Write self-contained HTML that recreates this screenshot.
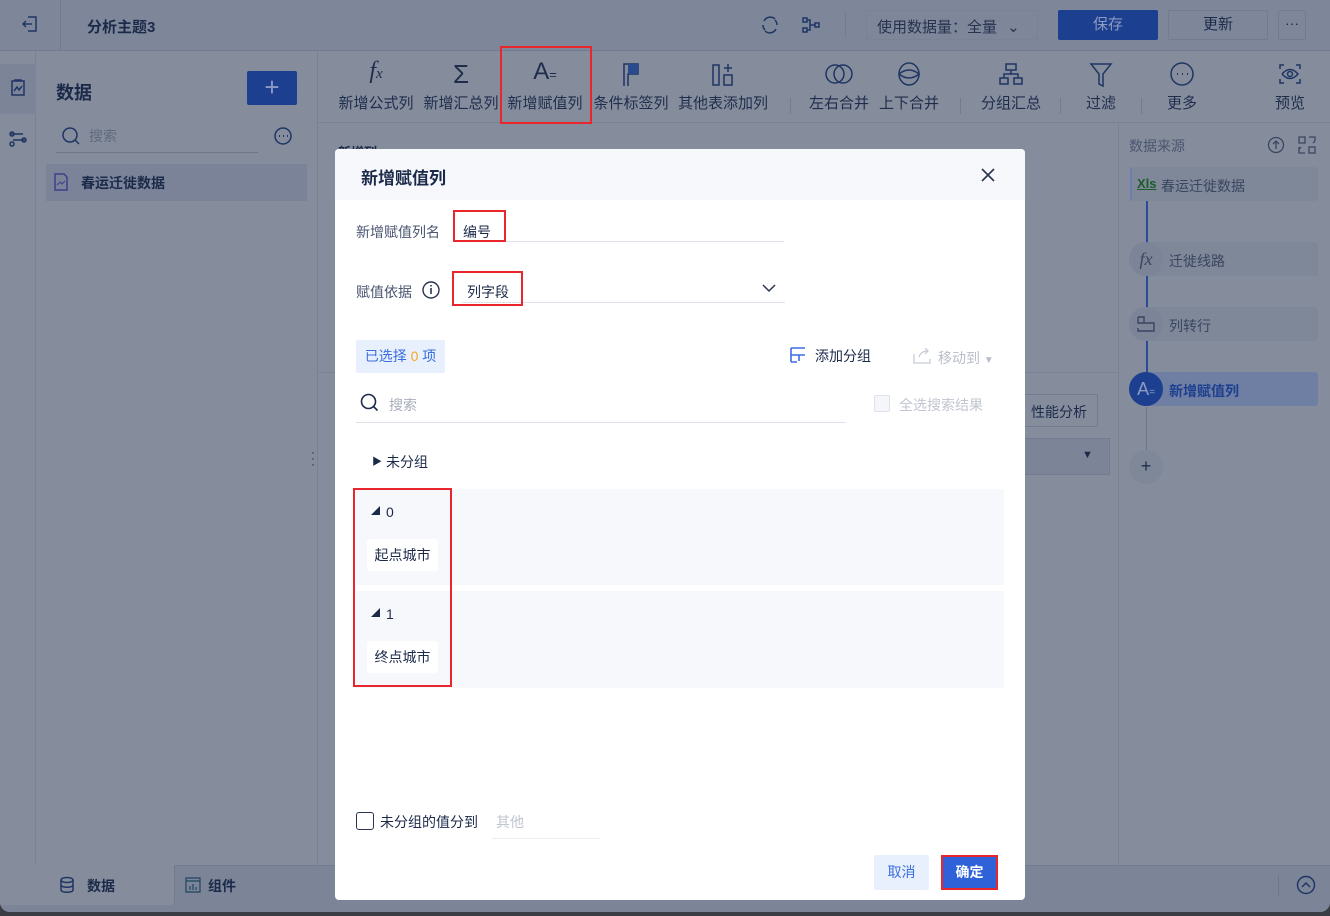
<!DOCTYPE html>
<html><head><meta charset="utf-8"><style>
*{margin:0;padding:0;box-sizing:border-box}
body{width:1330px;height:916px;overflow:hidden;background:#3a3d44;font-family:"Liberation Sans","Noto Sans CJK SC",sans-serif;color:#1c2a4a;font-size:14px}
.a{position:absolute}
.root{position:absolute;left:0;top:0;width:1330px;height:912px;background:#858d9c;border-radius:0 0 10px 10px;overflow:hidden}
.tb{font-size:15px;color:#1f2d4d;text-align:center;white-space:nowrap}
.tb>div:first-child,.tb>svg{display:block;margin:0 auto;height:34px}
.ic{stroke:#1f3563;fill:none;stroke-width:1.5}
.red{border:2px solid #e8262c}
</style></head><body>
<div class="root">
 <div class="a" style="left:0;top:0;width:1330px;height:51px;background:#7e8799;border-bottom:1px solid #737c8e"></div>
 <div class="a" style="left:60px;top:0;width:1px;height:51px;background:#737c8e"></div>
 <svg class="a" style="left:20px;top:14px" width="20" height="20" viewBox="0 0 20 20"><path class="ic" d="M8 3h8v14H8M3 10h9M6 7l-3 3 3 3"/></svg>
 <div class="a" style="left:87px;top:16px;font-weight:bold;font-size:15px">分析主题3</div>
 <svg class="a" style="left:759px;top:14px" width="22" height="22" viewBox="0 0 22 22"><path class="ic" d="M5 7a7 7 0 0 1 11-2M17 15a7 7 0 0 1-11 2M4 11a7 7 0 0 0 2 5M18 11a7 7 0 0 0-2-5"/></svg>
 <svg class="a" style="left:800px;top:14px" width="22" height="22" viewBox="0 0 22 22"><path class="ic" d="M3 4h4v4H3zM3 14h4v4H3zM15 9h4v4h-4zM7 6h3v10H7M10 11h5"/></svg>
 <div class="a" style="left:845px;top:12px;width:1px;height:26px;background:#737c8e"></div>
 <div class="a" style="left:866px;top:10px;width:172px;height:30px;border:1px solid #7a8395;border-radius:2px;font-size:15px;padding:5px 10px;color:#25314e">使用数据量：全量 <span style="margin-left:6px">&#8964;</span></div>
 <div class="a" style="left:1058px;top:10px;width:100px;height:30px;background:#1c3f8f;border-radius:2px;color:#8d9bc0;text-align:center;line-height:30px;font-size:15px">保存</div>
 <div class="a" style="left:1168px;top:10px;width:100px;height:30px;border:1px solid #737c8e;border-radius:2px;text-align:center;line-height:28px;font-size:15px">更新</div>
 <div class="a" style="left:1278px;top:10px;width:28px;height:30px;border:1px solid #737c8e;border-radius:2px;text-align:center;line-height:24px">···</div>

 <div class="a" style="left:0;top:51px;width:36px;height:814px;border-right:1px solid #7a8395"></div>
 <div class="a" style="left:0;top:64px;width:36px;height:50px;background:#7c8597"></div>
 <svg class="a" style="left:8px;top:78px" width="20" height="20" viewBox="0 0 20 20"><path class="ic" d="M4 3h12v14H4zM7 3v-1h6v1M6 13l3-4 2 3 3-4"/></svg>
 <svg class="a" style="left:8px;top:128px" width="20" height="20" viewBox="0 0 20 20"><path class="ic" d="M3 6h12M5 12h12"/><circle class="ic" cx="4" cy="6" r="2"/><circle class="ic" cx="16" cy="12" r="2"/><circle class="ic" cx="4" cy="16" r="2"/></svg>

 <div class="a" style="left:317px;top:51px;width:1px;height:814px;background:#7a8395"></div>
 <div class="a" style="left:56px;top:79px;font-size:18px;font-weight:bold">数据</div>
 <div class="a" style="left:247px;top:71px;width:50px;height:34px;background:#1c3f8f;border-radius:2px;color:#8d9bc0;text-align:center;font-size:26px;line-height:32px">+</div>
 <svg class="a" style="left:60px;top:125px" width="22" height="22" viewBox="0 0 22 22"><circle class="ic" cx="10" cy="10" r="7"/><path class="ic" d="M15 15l4 4"/></svg>
 <div class="a" style="left:89px;top:126px;color:#5f6a80">搜索</div>
 <div class="a" style="left:56px;top:152px;width:202px;height:1px;background:#6d778a"></div>
 <svg class="a" style="left:272px;top:125px" width="22" height="22" viewBox="0 0 22 22"><circle class="ic" cx="11" cy="11" r="8"/><path d="M7 11h1M11 11h1M15 11h1" stroke="#1f3563" stroke-width="2"/></svg>
 <div class="a" style="left:46px;top:164px;width:261px;height:37px;background:#7a8397"></div>
 <svg class="a" style="left:53px;top:173px" width="16" height="18" viewBox="0 0 16 18"><path d="M2 1h9l3 3v13H2z" stroke="#3c3f8a" fill="none" stroke-width="1.5"/><path d="M4 12l3-3 2 2 3-3" stroke="#3c3f8a" fill="none"/></svg>
 <div class="a" style="left:81px;top:173px;font-weight:bold">春运迁徙数据</div>
 <div class="a" style="left:311px;top:449px;color:#1f2d4d;font-size:12px;line-height:6px">·<br>·<br>·</div>

 <div class="a" style="left:318px;top:122px;width:1012px;height:1px;background:#7a8395"></div>
 <div class="a tb" style="left:336px;top:58px;width:80px"><div style="font-style:italic;font-size:24px;font-family:'Liberation Serif',serif">f<span style="font-size:15px">x</span></div>新增公式列</div>
 <div class="a tb" style="left:421px;top:58px;width:80px"><div style="font-size:26px;line-height:32px">Σ</div>新增汇总列</div>
 <div class="a tb" style="left:505px;top:58px;width:80px"><div style="font-size:24px">A<span style="font-size:13px">=</span></div>新增赋值列</div>
 <div class="a red" style="left:500px;top:46px;width:92px;height:78px"></div>
 <div class="a tb" style="left:591px;top:58px;width:80px"><svg width="22" height="34" viewBox="0 0 22 34"><path d="M4 28V6h14v10H8v12" stroke="#1f3563" fill="none" stroke-width="1.5"/><path d="M8 6h10v10H8z" fill="#2a4a8f"/></svg>条件标签列</div>
 <div class="a tb" style="left:674px;top:58px;width:98px"><svg width="26" height="34" viewBox="0 0 26 34"><path class="ic" d="M3 7h6v20H3zM14 17h8v10h-8zM18 6v8M14 10h8"/></svg>其他表添加列</div>
 <div class="a" style="left:790px;top:98px;width:1px;height:16px;background:#737c8e"></div>
 <div class="a tb" style="left:806px;top:58px;width:66px"><svg width="30" height="34" viewBox="0 0 30 34"><circle class="ic" cx="11" cy="16" r="9"/><circle class="ic" cx="19" cy="16" r="9"/></svg>左右合并</div>
 <div class="a tb" style="left:876px;top:58px;width:66px"><svg width="30" height="34" viewBox="0 0 30 34"><ellipse class="ic" cx="15" cy="16" rx="10" ry="11"/><path class="ic" d="M5 16q10-8 20 0q-10 8-20 0"/></svg>上下合并</div>
 <div class="a" style="left:960px;top:98px;width:1px;height:16px;background:#737c8e"></div>
 <div class="a tb" style="left:978px;top:58px;width:66px"><svg width="30" height="34" viewBox="0 0 30 34"><path class="ic" d="M10 6h10v6H10zM4 20h8v6H4zM18 20h8v6h-8zM15 12v4M8 20v-4h14v4"/></svg>分组汇总</div>
 <div class="a" style="left:1060px;top:98px;width:1px;height:16px;background:#737c8e"></div>
 <div class="a tb" style="left:1076px;top:58px;width:50px"><svg width="30" height="34" viewBox="0 0 30 34"><path class="ic" d="M5 6h20l-8 10v12l-4-2V16z"/></svg>过滤</div>
 <div class="a" style="left:1141px;top:98px;width:1px;height:16px;background:#737c8e"></div>
 <div class="a tb" style="left:1157px;top:58px;width:50px"><svg width="30" height="34" viewBox="0 0 30 34"><circle class="ic" cx="15" cy="16" r="11"/><path d="M10 16h1M15 16h1M20 16h1" stroke="#1f3563" stroke-width="2"/></svg>更多</div>
 <div class="a tb" style="left:1265px;top:58px;width:50px"><svg width="30" height="34" viewBox="0 0 30 34"><path class="ic" d="M5 11V7h4M21 7h4v4M25 21v4h-4M9 25H5v-4M7 16q8-9 16 0q-8 9-16 0"/><circle class="ic" cx="15" cy="16" r="2.5"/></svg>预览</div>

 <div class="a" style="left:338px;top:142px;font-weight:bold;font-size:13px">新增列</div>
 <div class="a" style="left:318px;top:372px;width:800px;height:1px;background:#7a8395"></div>
 <div class="a" style="left:1022px;top:394px;width:76px;height:33px;border:1px solid #737c8e;border-radius:2px;padding:7px 0 0 8px">性能分析</div>
 <div class="a" style="left:1022px;top:438px;width:88px;height:37px;background:#7c8597;border:1px solid #737c8e"></div>
 <div class="a" style="left:1082px;top:449px;font-size:11px">▼</div>

 <div class="a" style="left:1118px;top:122px;width:1px;height:743px;background:#7a8395"></div>
 <div class="a" style="left:1129px;top:136px;color:#4a5570">数据来源</div>
 <svg class="a" style="left:1266px;top:135px" width="20" height="20" viewBox="0 0 20 20"><circle cx="10" cy="10" r="7.5" stroke="#3a4560" fill="none" stroke-width="1.3"/><path d="M10 14V6M7 9l3-3 3 3" stroke="#3a4560" fill="none" stroke-width="1.3"/></svg>
 <svg class="a" style="left:1297px;top:135px" width="20" height="20" viewBox="0 0 20 20"><path d="M2 2h6v6H2zM12 12h6v6h-6zM12 2h6v4M2 12v6h6M16 8l2-2M4 12l-2 2" stroke="#3a4560" fill="none" stroke-width="1.3"/></svg>
 <div class="a" style="left:1130px;top:167px;width:188px;height:34px;background:#7f8899;border-radius:3px;border-left:2px solid #6b7fae"></div>
 <div class="a" style="left:1137px;top:176px;font-size:13px;color:#1d5c2a;font-weight:bold;text-decoration:underline">Xls</div>
 <div class="a" style="left:1161px;top:176px;color:#3a4560">春运迁徙数据</div>
 <div class="a" style="left:1146px;top:201px;width:2px;height:172px;background:#2a4a9f"></div>
 <div class="a" style="left:1146px;top:407px;width:1px;height:48px;background:#6d778a"></div>
 <div class="a" style="left:1148px;top:242px;width:170px;height:34px;background:#7f8899;border-radius:3px"></div>
 <div class="a" style="left:1129px;top:242px;width:34px;height:34px;border-radius:17px;background:#7c8597;text-align:center;line-height:34px;font-style:italic;color:#3a4560;font-size:18px;font-family:'Liberation Serif',serif">fx</div>
 <div class="a" style="left:1169px;top:251px;color:#3a4560">迁徙线路</div>
 <div class="a" style="left:1148px;top:307px;width:170px;height:34px;background:#7f8899;border-radius:3px"></div>
 <div class="a" style="left:1129px;top:307px;width:34px;height:34px;border-radius:17px;background:#7c8597"></div>
 <svg class="a" style="left:1136px;top:315px" width="20" height="18" viewBox="0 0 20 18"><path d="M2 2h6v6M2 2v6h16v8H2v-3" stroke="#3a4560" fill="none" stroke-width="1.4"/></svg>
 <div class="a" style="left:1169px;top:316px;color:#3a4560">列转行</div>
 <div class="a" style="left:1148px;top:372px;width:170px;height:34px;background:#6f7fa3;border-radius:3px"></div>
 <div class="a" style="left:1129px;top:372px;width:34px;height:34px;border-radius:17px;background:#1c3f8f;text-align:center;line-height:34px;color:#8d9bc0;font-size:18px">A<span style="font-size:10px">=</span></div>
 <div class="a" style="left:1169px;top:381px;color:#1c3f8f;font-weight:bold">新增赋值列</div>
 <div class="a" style="left:1129px;top:450px;width:34px;height:34px;border-radius:17px;background:#7f8899;text-align:center;line-height:32px;font-size:18px;color:#1f2d4d">+</div>

 <div class="a" style="left:0;top:865px;width:1330px;height:51px;background:#7c8598;border-top:1px solid #737c8e"></div>
 <div class="a" style="left:0;top:865px;width:175px;height:40px;background:#858d9c;border-radius:0 0 4px 0;border-right:1px solid #737c8e"></div>
 <svg class="a" style="left:58px;top:876px" width="18" height="18" viewBox="0 0 18 18"><ellipse cx="9" cy="4" rx="6" ry="2.5" stroke="#1f3563" fill="none" stroke-width="1.5"/><path d="M3 4v10c0 3 12 3 12 0V4M3 9c0 3 12 3 12 0" stroke="#1f3563" fill="none" stroke-width="1.5"/></svg>
 <div class="a" style="left:87px;top:876px;font-weight:bold">数据</div>
 <svg class="a" style="left:185px;top:877px" width="16" height="16" viewBox="0 0 16 16"><path d="M1 1h14v14H1zM1 4h14M5 13V9M8 13V7M11 13V10" stroke="#1f4560" fill="none" stroke-width="1.2"/></svg>
 <div class="a" style="left:208px;top:876px;font-weight:bold">组件</div>
 <div class="a" style="left:1278px;top:876px;width:1px;height:20px;background:#6d778a"></div>
 <svg class="a" style="left:1295px;top:874px" width="22" height="22" viewBox="0 0 22 22"><circle cx="11" cy="11" r="8.5" stroke="#1f3563" fill="none" stroke-width="1.5"/><path d="M7 13l4-4 4 4" stroke="#1f3563" fill="none" stroke-width="1.5"/></svg>

 <div class="a" style="left:335px;top:149px;width:690px;height:751px;background:#fff;border-radius:4px;overflow:hidden">
  <div class="a" style="left:0;top:0;width:690px;height:51px;background:#f7f8fb"></div>
  <div class="a" style="left:26px;top:15px;font-size:17px;font-weight:bold;color:#1c2a4a">新增赋值列</div>
  <svg class="a" style="left:644px;top:17px" width="18" height="18" viewBox="0 0 18 18"><path d="M3 3l12 12M15 3L3 15" stroke="#2a3550" stroke-width="1.6"/></svg>

  <div class="a" style="left:21px;top:73px;color:#4a5570;font-size:14px">新增赋值列名</div>
  <div class="a" style="left:128px;top:73px;color:#1c2a4a">编号</div>
  <div class="a" style="left:165px;top:92px;width:284px;height:1px;background:#dfe2ea"></div>
  <div class="a red" style="left:118px;top:61px;width:53px;height:32px"></div>

  <div class="a" style="left:21px;top:133px;color:#4a5570">赋值依据</div>
  <svg class="a" style="left:86px;top:131px" width="20" height="20" viewBox="0 0 20 20"><circle cx="10" cy="10" r="8" stroke="#2a3550" fill="none" stroke-width="1.4"/><path d="M10 8v6M10 5v1.5" stroke="#2a3550" stroke-width="1.6"/></svg>
  <div class="a" style="left:132px;top:133px;color:#1c2a4a">列字段</div>
  <svg class="a" style="left:426px;top:133px" width="16" height="12" viewBox="0 0 16 12"><path d="M2 3l6 6 6-6" stroke="#2a3550" fill="none" stroke-width="1.5"/></svg>
  <div class="a" style="left:127px;top:153px;width:323px;height:1px;background:#dfe2ea"></div>
  <div class="a red" style="left:117px;top:122px;width:71px;height:35px"></div>

  <div class="a" style="left:21px;top:191px;width:89px;height:33px;background:#e9f0fd;border-radius:2px;color:#3a6ee0;line-height:33px;text-align:center">已选择 <span style="color:#f5a623">0</span> 项</div>
  <svg class="a" style="left:455px;top:197px" width="16" height="18" viewBox="0 0 16 18"><path d="M1 2h14M1 2v14M1 9h14M1 16h6M9 9v6" stroke="#3a6ee0" fill="none" stroke-width="1.6"/></svg>
  <div class="a" style="left:480px;top:197px;color:#1c2a4a">添加分组</div>
  <svg class="a" style="left:578px;top:199px" width="18" height="16" viewBox="0 0 18 16"><path d="M1 6v9h16v-4M6 9q2-6 9-6M12 0l3 3-3 3" stroke="#c8ccd6" fill="none" stroke-width="1.3"/></svg>
  <div class="a" style="left:603px;top:199px;color:#b8bdc8">移动到 <span style="font-size:10px">▼</span></div>

  <svg class="a" style="left:24px;top:243px" width="22" height="22" viewBox="0 0 22 22"><circle cx="9.5" cy="9.5" r="7" stroke="#1c2a4a" fill="none" stroke-width="1.6"/><path d="M14.5 14.5l4 4" stroke="#1c2a4a" stroke-width="1.6"/></svg>
  <div class="a" style="left:54px;top:246px;color:#a8aebb">搜索</div>
  <div class="a" style="left:21px;top:273px;width:490px;height:1px;background:#dfe2ea"></div>
  <div class="a" style="left:539px;top:246px;width:16px;height:17px;border:1px solid #dfe2ea;border-radius:2px;background:#f5f6f9"></div>
  <div class="a" style="left:564px;top:246px;color:#c0c5cf">全选搜索结果</div>

  <div class="a" style="left:37px;top:304px;font-size:10px">▶</div>
  <div class="a" style="left:51px;top:303px;color:#1c2a4a">未分组</div>

  <div class="a" style="left:21px;top:340px;width:648px;height:96px;background:#f7f8fb"></div>
  <div class="a" style="left:21px;top:442px;width:648px;height:97px;background:#f7f8fb"></div>
  <div class="a" style="left:36px;top:355px;font-size:9px">◢</div>
  <div class="a" style="left:51px;top:355px;color:#1c2a4a">0</div>
  <div class="a" style="left:32px;top:390px;width:71px;height:32px;background:#fff;border-radius:3px;text-align:center;line-height:32px">起点城市</div>
  <div class="a" style="left:36px;top:457px;font-size:9px">◢</div>
  <div class="a" style="left:51px;top:457px;color:#1c2a4a">1</div>
  <div class="a" style="left:32px;top:492px;width:71px;height:32px;background:#fff;border-radius:3px;text-align:center;line-height:32px">终点城市</div>
  <div class="a red" style="left:18px;top:339px;width:99px;height:199px"></div>

  <div class="a" style="left:21px;top:663px;width:18px;height:18px;border:1.5px solid #2a3550;border-radius:3px"></div>
  <div class="a" style="left:45px;top:663px;color:#1c2a4a">未分组的值分到</div>
  <div class="a" style="left:161px;top:663px;color:#c0c5cf">其他</div>
  <div class="a" style="left:157px;top:689px;width:108px;height:1px;background:#eceef2"></div>

  <div class="a" style="left:539px;top:706px;width:55px;height:35px;background:#e9f0fd;border-radius:2px;color:#3a6ee0;text-align:center;line-height:35px">取消</div>
  <div class="a" style="left:606px;top:706px;width:57px;height:35px;background:#2f62d8;border:2px solid #e8262c;color:#fff;text-align:center;line-height:31px;font-weight:bold">确定</div>
 </div>
</div>
</body></html>
